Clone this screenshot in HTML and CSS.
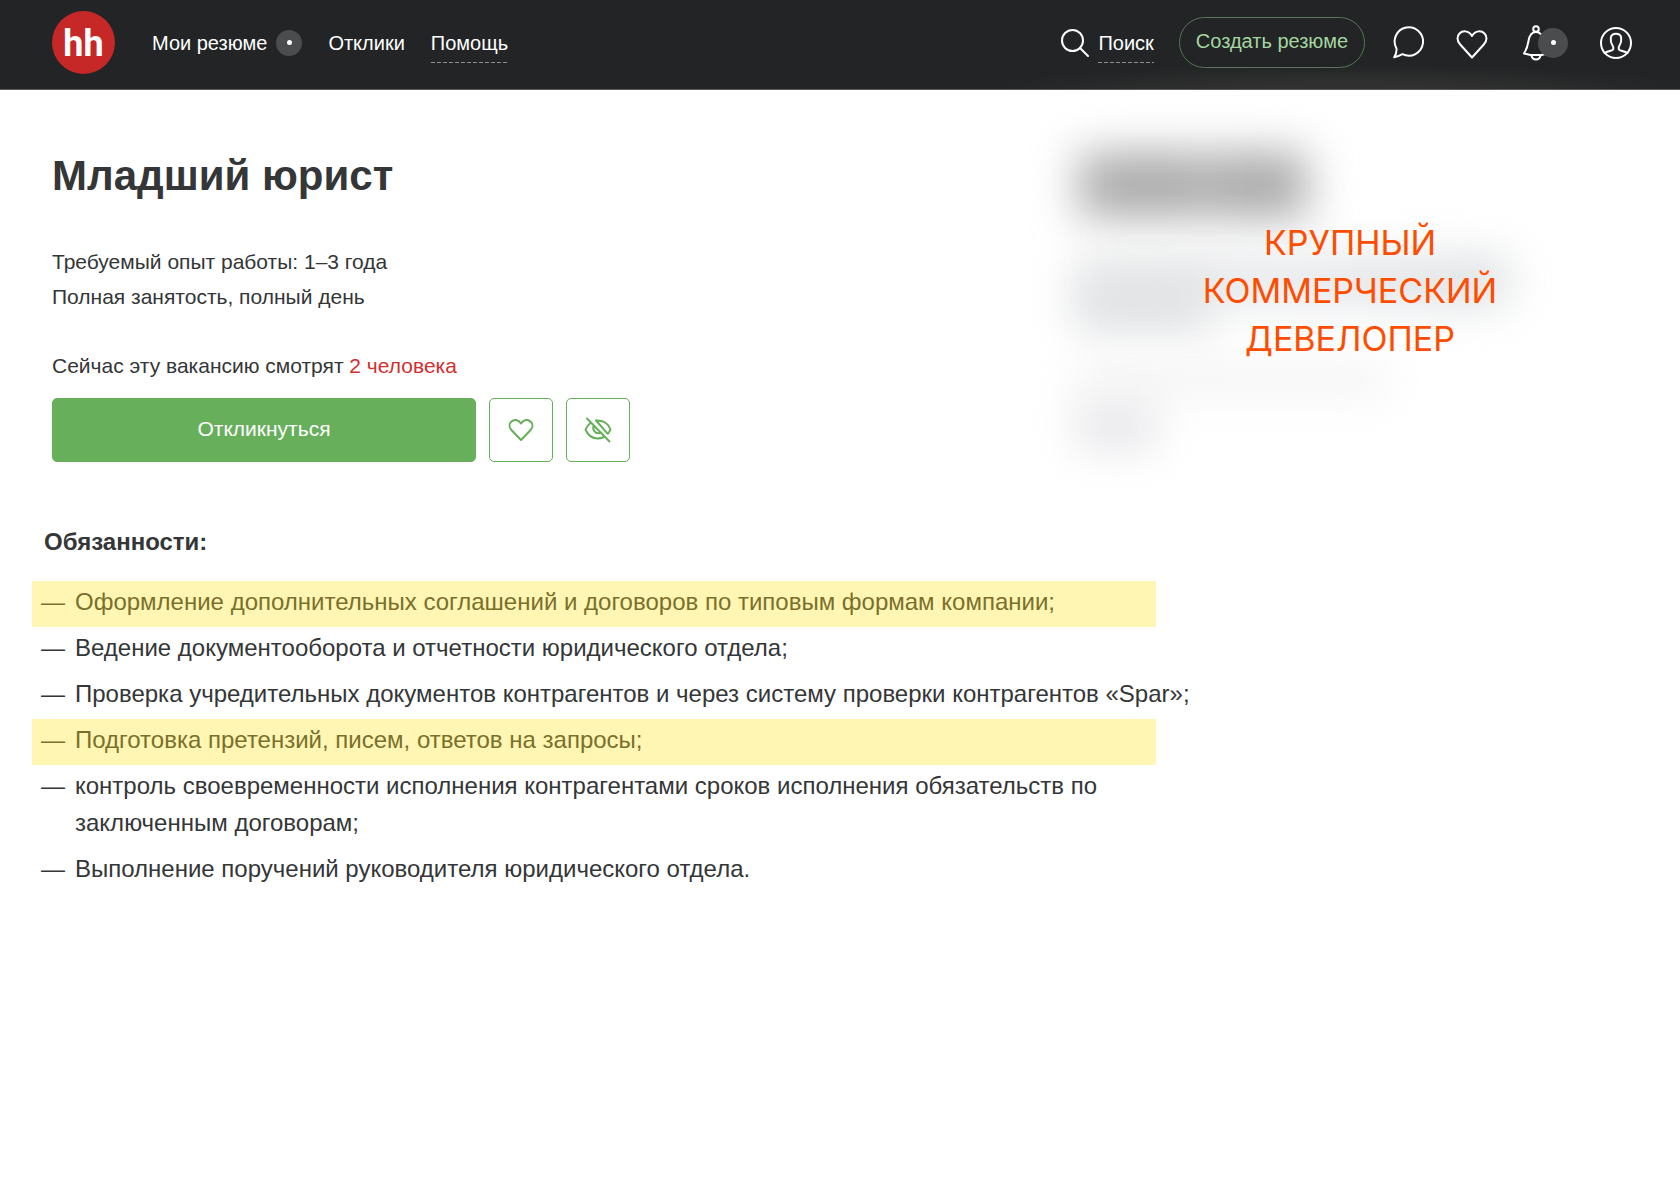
FILE: index.html
```html
<!DOCTYPE html>
<html lang="ru">
<head>
<meta charset="utf-8">
<meta name="viewport" content="width=device-width, initial-scale=1">
<title>Младший юрист</title>
<link rel="stylesheet" href="styles.css">
</head>
<body>
<header class="header">
  <a class="logo" href="#" aria-label="hh">hh</a>
  <nav class="nav">
    <a class="nav-link" href="#"><span>Мои резюме</span><span class="dot"></span></a>
    <a class="nav-link" href="#">Отклики</a>
    <a class="nav-link" href="#"><span class="dashed">Помощь</span></a>
  </nav>
  <div class="tools">
    <a class="nav-link search" href="#">
      <svg width="28" height="28" viewBox="0 0 28 28" class="icon"><circle cx="11.500" cy="11.500" r="10.500"/><path d="M19 19l8 8"/></svg>
      <span class="dashed">Поиск</span>
    </a>
    <button class="create" type="button">Создать резюме</button>
    <a class="tool" href="#" aria-label="Чаты"><svg width="32" height="34" viewBox="0 0 32 34" class="icon"><path d="M3.500 22.500A14.200 14.200 0 1 1 9.500 28.200C7 29.500 4.500 30.800 1.200 31.300C3 28.500 3.800 25.500 3.500 22.500Z"/></svg></a>
    <a class="tool" href="#" aria-label="Избранное"><svg width="32" height="34" viewBox="0 0 32 34" class="icon"><path d="M16 31.500L4.200 18.500C.5 14.500 1 10 3.500 7.500C6.500 4.500 12.500 4 16 10C19.500 4 25.500 4.500 28.500 7.500C31 10 31.500 14.500 27.800 18.500Z"/></svg></a>
    <a class="tool bell" href="#" aria-label="Уведомления"><svg width="28" height="36" viewBox="0 0 28 36" class="icon"><circle cx="14" cy="4" r="2.800"/><path d="M14 7C9 7 7.300 11 6.500 16C5.800 21.500 4.500 24.500 2 28.500L8.500 30H19.500L26 28.500C23.500 24.500 22.200 21.500 21.500 16C20.700 11 19 7 14 7ZM9.500 30.500C10 33 11.500 34.500 14 34.500C16.500 34.500 18 33 18.500 30.500"/></svg><span class="dot dot-large"></span></a>
    <a class="tool" href="#" aria-label="Профиль"><svg width="32" height="34" viewBox="0 0 32 34" class="icon"><circle cx="16" cy="17" r="15"/><path d="M4.500 27C7 25.500 10.500 25 12.300 24.200C13.800 23.500 13.500 21 12.500 19.500C10.800 17 10.500 14.500 10.800 12C11.200 9 13 7.800 16 7.800C19 7.800 20.800 9 21.200 12C21.500 14.500 21.200 17 19.500 19.500C18.500 21 18.200 23.500 19.700 24.200C21.500 25 25 25.500 27.500 27"/></svg></a>
  </div>
</header>
<main class="page">
  <div class="top">
    <section class="vacancy">
      <h1 class="title">Младший юрист</h1>
      <p class="info">Требуемый опыт работы: 1–3 года</p>
      <p class="info">Полная занятость, полный день</p>
      <p class="info watching">Сейчас эту вакансию смотрят <span class="count">2 человека</span></p>
      <div class="actions">
        <button class="apply" type="button">Откликнуться</button>
        <button class="square" type="button" aria-label="В избранное"><svg width="26" height="24" viewBox="0 0 26 24" class="icon"><path d="M13 22L3.400 12C.8 9.200 1.200 5.800 3.200 3.800C6 1 10.500 1.300 13 5.500C15.500 1.300 20 1 22.800 3.800C24.800 5.800 25.200 9.200 22.600 12Z"/></svg></button>
        <button class="square" type="button" aria-label="Скрыть вакансию"><svg width="28" height="26" viewBox="0 0 28 26" class="icon"><path d="M3 1.500L25.500 24.500M7 5.500C4.500 7.500 2.500 10 1.500 12.500C4 18.500 8.500 21.500 13.500 21.500C15.800 21.500 18 21 20 20M12 3.500C19 2.800 24.500 6.500 26.500 12.500C25.800 14.300 25 15.500 23.800 16.800L12 3.500M9.500 8.500C8.300 12.500 10.800 16.800 15.500 16.300"/></svg></button>
      </div>
    </section>
    <aside class="company">
      <div class="haze">
        <div class="smear smear-name"></div>
        <div class="smear smear-wide"></div>
        <div class="smear smear-block"></div>
        <div class="smear smear-line"></div>
        <div class="smear smear-short"></div>
      </div>
      <p class="company-note">КРУПНЫЙ<br>КОММЕРЧЕСКИЙ<br>ДЕВЕЛОПЕР</p>
    </aside>
  </div>
  <section class="duties">
    <h2 class="subtitle">Обязанности:</h2>
    <ul class="list">
      <li class="item marked">Оформление дополнительных соглашений и договоров по типовым формам компании;</li>
      <li class="item">Ведение документооборота и отчетности юридического отдела;</li>
      <li class="item">Проверка учредительных документов контрагентов и через систему проверки контрагентов «Spar»;</li>
      <li class="item marked">Подготовка претензий, писем, ответов на запросы;</li>
      <li class="item">контроль своевременности исполнения контрагентами сроков исполнения обязательств по<br>заключенным договорам;</li>
      <li class="item">Выполнение поручений руководителя юридического отдела.</li>
    </ul>
  </section>
</main>
</body>
</html>
```
FILE: styles.css
```css
* { box-sizing: border-box; }

body {
  margin: 0;
  background: #fff;
  color: #343637;
  font-family: "Liberation Sans", Arial, sans-serif;
  font-size: 21px;
}

h1, h2, p, ul { margin: 0; padding: 0; }
a { color: inherit; text-decoration: none; }
button { font: inherit; cursor: pointer; }

.icon {
  display: block;
  flex: none;
  fill: none;
  stroke: currentColor;
  stroke-width: 2;
  stroke-linecap: round;
  stroke-linejoin: round;
}

.header {
  display: flex;
  align-items: center;
  height: 90px;
  padding: 0 48px 4px 52px;
  background: radial-gradient(ellipse 360px 24px at 80% 100%, #303030 30%, transparent) #222425;
  border-bottom: 1px solid #5a5859;
  color: #fff;
  font-size: 20px;
}

.logo {
  display: flex;
  align-items: center;
  justify-content: center;
  width: 63px;
  height: 63px;
  padding-top: 3px;
  border-radius: 50%;
  background: #c62828;
  font: 700 36px/1 Roboto, sans-serif;
}

.nav {
  display: flex;
  align-items: center;
  gap: 26px;
  margin-left: 37px;
}

.nav-link {
  display: flex;
  align-items: center;
  gap: 9px;
  line-height: 40px;
}

.dashed {
  background: repeating-linear-gradient(90deg, #8c8e8f 0 4px, transparent 4px 6px) left bottom / 100% 1px no-repeat;
}

.dot {
  display: flex;
  align-items: center;
  justify-content: center;
  width: 26px;
  height: 26px;
  border-radius: 50%;
  background: #4b4c4e;
}
.dot::before {
  content: "";
  width: 5px;
  height: 5px;
  border-radius: 50%;
  background: #fff;
}
.dot-large { width: 30px; height: 30px; }

.tools {
  display: flex;
  align-items: center;
  margin-left: auto;
}

.create {
  height: 51px;
  margin: 0 28px 0 25px;
  padding: 0 16px 2px;
  border: 1px solid #587558;
  border-radius: 26px;
  background: transparent;
  color: #a5d6a0;
}

.tool + .tool { margin-left: 31px; }
.tool.bell {
  display: flex;
  align-items: center;
  margin-left: 34px;
}
.tool.bell + .tool { margin-left: 32px; }
.bell .dot { margin-left: -12px; z-index: 1; }

.page { padding: 0 32px 48px; }

.top {
  display: grid;
  grid-template-columns: 1fr 596px;
}

.vacancy { padding: 61px 0 0 20px; }

.title {
  margin-bottom: 43px;
  font-size: 42px;
  line-height: 50px;
}
.info { line-height: 35px; }
.watching { margin-top: 34px; }
.count { color: #d32f2f; }

.actions {
  display: flex;
  gap: 13px;
  margin-top: 15px;
}
.apply, .square {
  height: 64px;
  border: 1px solid #67af5b;
  border-radius: 5px;
  background: #67af5b;
  color: #fff;
}
.apply { width: 424px; padding-bottom: 3px; }
.square {
  display: flex;
  align-items: center;
  justify-content: center;
  width: 64px;
  background: #fff;
  color: #67af5b;
}

.company { position: relative; }
.haze { padding: 62px 0 0 26px; }
.smear { filter: blur(22px); }
.smear-name {
  width: 230px;
  height: 66px;
  background: linear-gradient(90deg, #b0b0b0, #a8a8a8 40%, #b4b4b4 52%, #a8a8a8 75%, #b0b0b0);
}
.smear-wide {
  width: 430px;
  height: 50px;
  margin-top: 38px;
  background: linear-gradient(90deg, #e8e9ea, #e6e8ea 50%, #dcdfe1);
}
.smear-block {
  width: 130px;
  height: 50px;
  margin-top: -26px;
  background: #dee0e2;
}
.smear-line {
  width: 310px;
  height: 28px;
  margin-top: 36px;
  background: #f2f2f2;
}
.smear-short {
  width: 76px;
  height: 44px;
  margin-top: 10px;
  background: #e4e4e8;
}

.company-note {
  position: absolute;
  top: 129px;
  left: 0;
  width: 100%;
  color: #ff4d00;
  font: 400 34px/48px Inter, sans-serif;
  text-align: center;
}

.duties { padding-top: 62px; }
.subtitle {
  margin: 0 0 21px 12px;
  font-size: 24px;
  line-height: 36px;
}
.list { list-style: none; }
.item {
  display: block;
  max-width: 1200px;
  padding: 2px 0 7px 43px;
  font-size: 24px;
  line-height: 37px;
  text-indent: -34px;
}
.item::before {
  content: "—";
  display: inline-block;
  width: 34px;
  text-indent: 0;
}
.marked {
  max-width: 1124px;
  background: #fff6b3;
  color: #7a702c;
}
```
